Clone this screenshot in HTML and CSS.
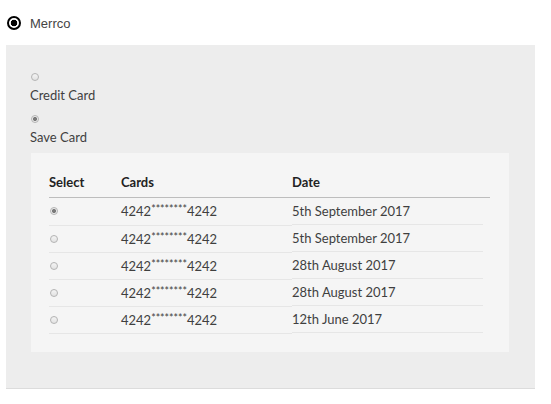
FILE: index.html
```html
<!DOCTYPE html>
<html>
<head>
<meta charset="utf-8">
<link rel="stylesheet" href="styles.css">
</head>
<body>
<div class="method">
  <span class="big-radio"></span>
  <span class="method-name">Merrco</span>
</div>
<div class="panel">
  <div class="option">
    <span class="radio"></span>
    <div class="option-label">Credit Card</div>
  </div>
  <div class="option option-save">
    <span class="radio checked"></span>
    <div class="option-label">Save Card</div>
  </div>
  <div class="cards">
    <table class="card-table">
      <thead>
        <tr><th class="col-select">Select</th><th class="col-card">Cards</th><th>Date</th></tr>
      </thead>
      <tbody>
        <tr><td><span class="radio checked"></span></td><td>4242<span class="mask">********</span>4242</td><td>5th September 2017</td></tr>
        <tr><td><span class="radio"></span></td><td>4242<span class="mask">********</span>4242</td><td>5th September 2017</td></tr>
        <tr><td><span class="radio"></span></td><td>4242<span class="mask">********</span>4242</td><td>28th August 2017</td></tr>
        <tr><td><span class="radio"></span></td><td>4242<span class="mask">********</span>4242</td><td>28th August 2017</td></tr>
        <tr><td><span class="radio"></span></td><td>4242<span class="mask">********</span>4242</td><td>12th June 2017</td></tr>
      </tbody>
    </table>
  </div>
</div>
</body>
</html>
```
FILE: styles.css
```css
html, body {
  margin: 0;
  padding: 0;
  background: #fff;
}
body {
  font-family: Lato, "Open Sans", sans-serif;
  color: #3f3f3f;
}
.method {
  display: flex;
  align-items: center;
  padding: 16px 0 15px 7px;
}
.big-radio {
  box-sizing: border-box;
  width: 14px;
  height: 14px;
  border: 2px solid #000;
  border-radius: 50%;
  background: radial-gradient(circle, #000 0 3px, #fff 3.6px);
  margin-right: 9px;
}
.method-name {
  font-family: "Liberation Sans", Arial, sans-serif;
  font-size: 13px;
  line-height: 13px;
  color: #444;
}
.panel {
  margin: 0 16px 0 6px;
  background: #ededed;
  border-bottom: 1px solid #dcdcdc;
  padding: 28px 26px 36px 24px;
}
.radio {
  display: block;
  box-sizing: border-box;
  width: 8px;
  height: 8px;
  border: 1px solid #b4b4b4;
  border-radius: 50%;
  background: linear-gradient(#f4f4f4, #e2e2e2);
}
.radio.checked {
  background: radial-gradient(circle, #7a7a7a 0 1.6px, #ececec 2.4px);
}
.option .radio {
  margin-left: 1px;
}
.option-label {
  font-size: 13px;
  line-height: 20px;
  margin-top: 4px;
  color: #3f3f3f;
}
.option-save {
  margin-top: 10px;
}
.cards {
  margin: 6px 0 0 1px;
  background: #f5f5f5;
  padding: 19px 19px 18px 18px;
}
.card-table {
  width: 441px;
  border-collapse: collapse;
  font-size: 13px;
}
.card-table th {
  text-align: left;
  font-weight: 700;
  color: #222;
  line-height: 20px;
  padding: 0 0 5px 0;
  border-bottom: 1.5px solid #bdbdbd;
}
.col-select {
  width: 72px;
}
.col-card {
  width: 171px;
}
.card-table td {
  font-size: 13px;
  line-height: 20px;
  height: 20px;
  padding: 3px 0 3px 0;
  border-bottom: 1px solid #e6e6e6;
}
.card-table td:last-child {
  border-bottom: none;
  padding-bottom: 4px;
  background: linear-gradient(#e6e6e6, #e6e6e6) left bottom / calc(100% - 7px) 1px no-repeat;
}
.card-table td .radio {
  margin-left: 1px;
}
.mask {
  font-size: 10.5px;
  line-height: 8px;
  vertical-align: 3px;
}
```
